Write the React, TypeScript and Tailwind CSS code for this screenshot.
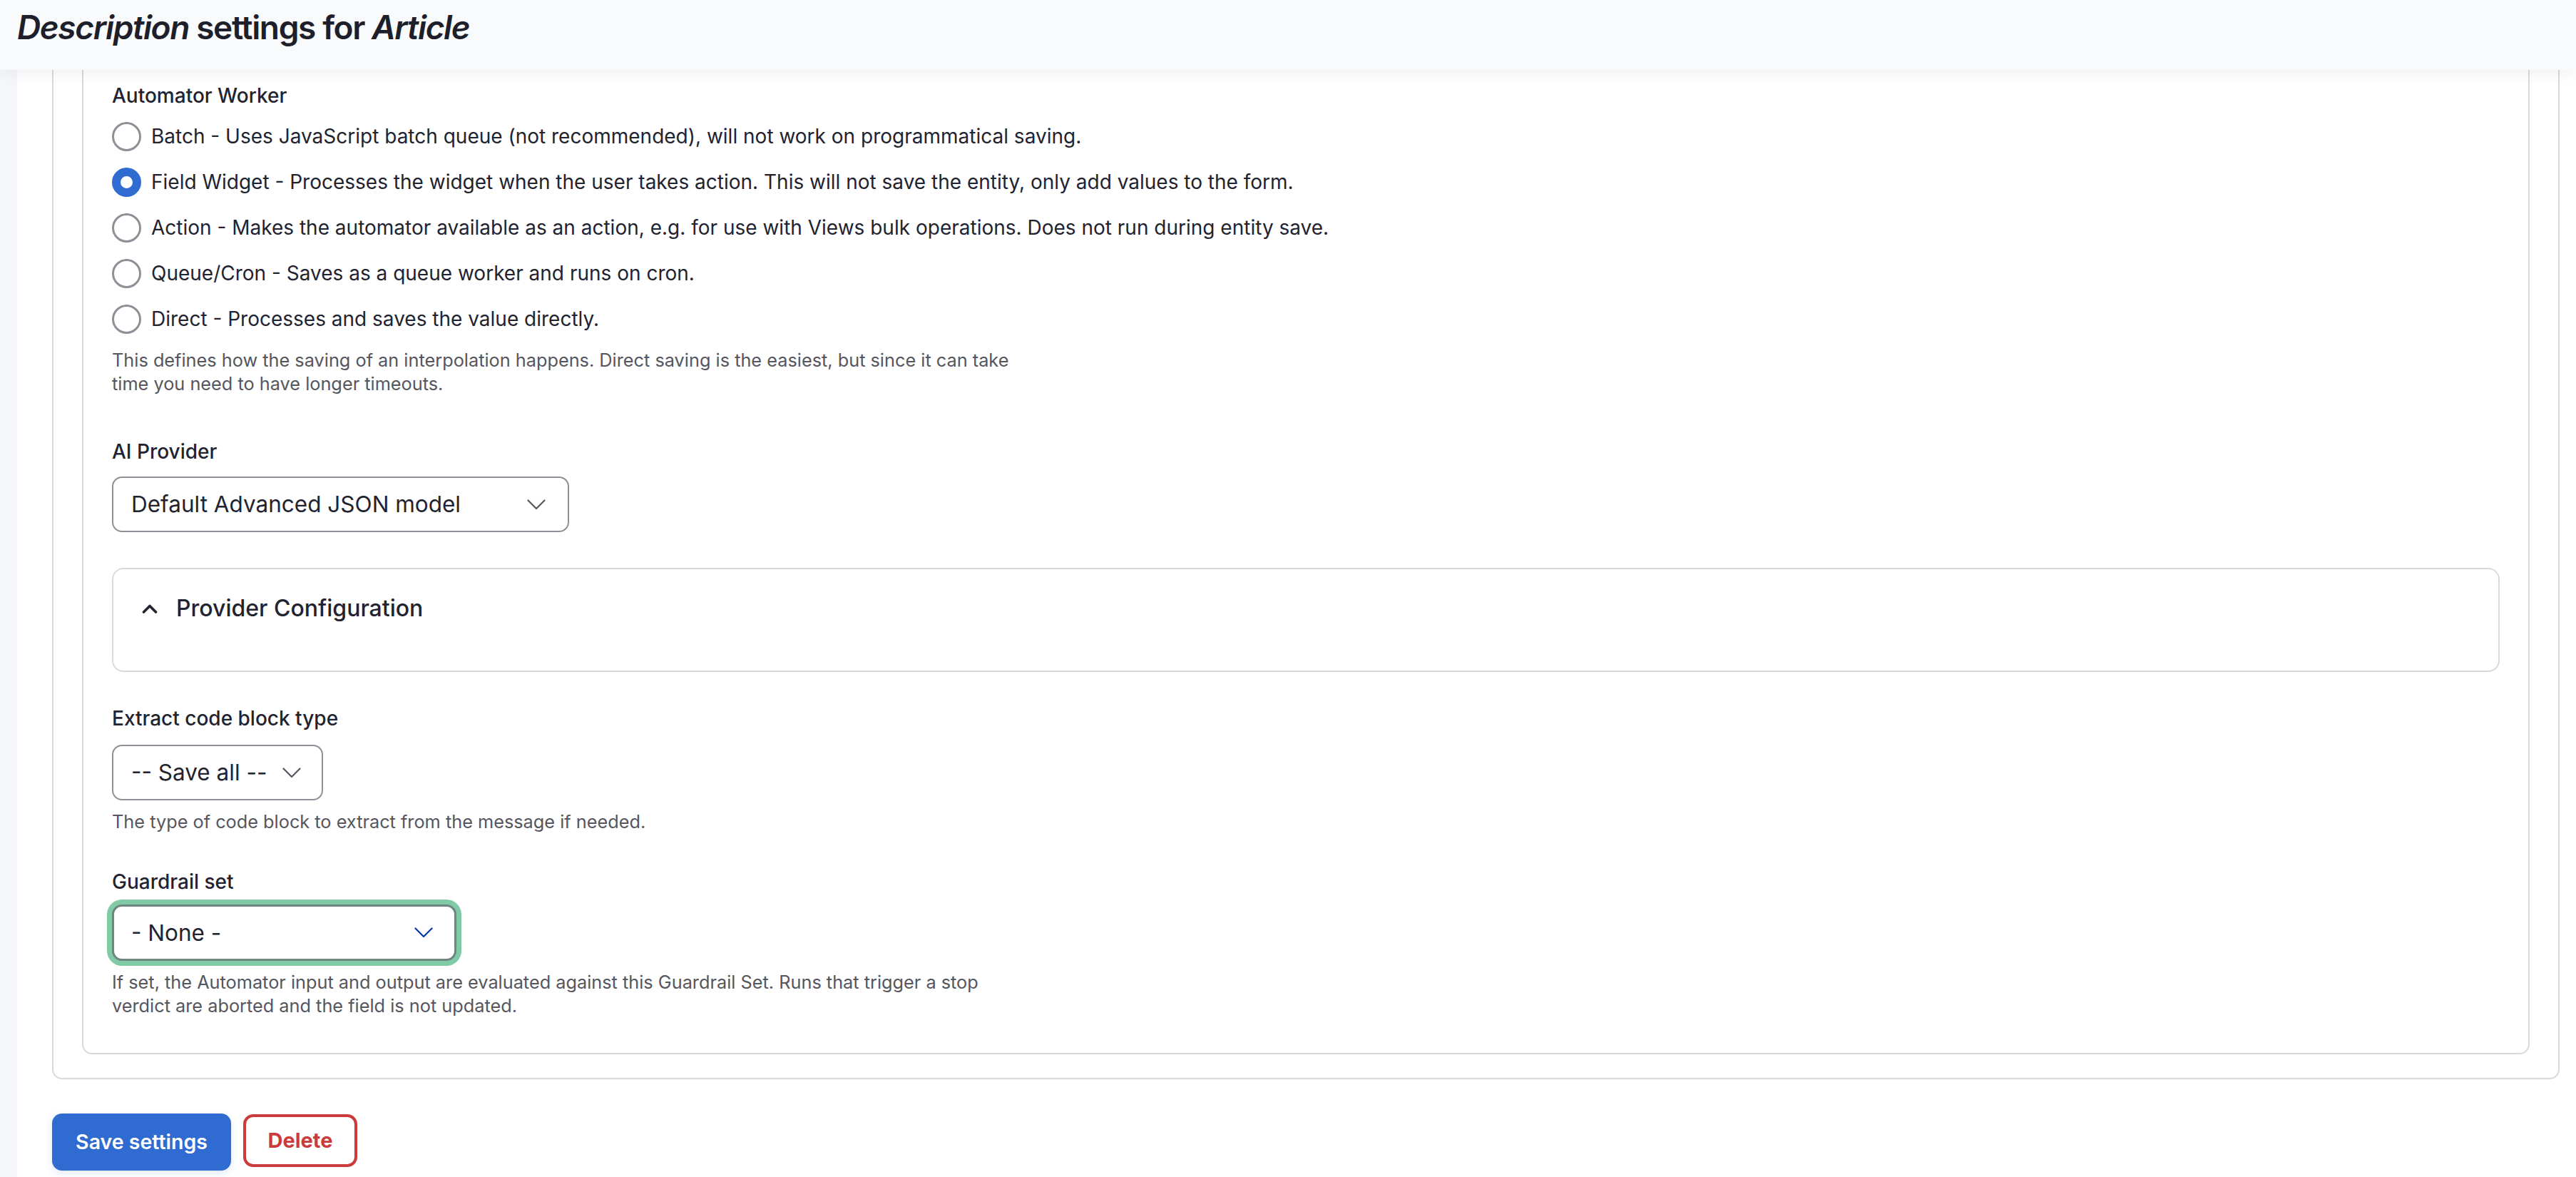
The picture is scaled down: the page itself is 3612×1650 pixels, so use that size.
import React from "react";

const labelCls = "block text-[28px] leading-[36px] font-medium text-[#222330]";
const descCls = "max-w-[1272px] text-[25.3px] leading-[33px] text-[#55565e]";

const workers = [
  { label: "Batch - Uses JavaScript batch queue (not recommended), will not work on programmatical saving.", checked: false },
  { label: "Field Widget - Processes the widget when the user takes action. This will not save the entity, only add values to the form.", checked: true },
  { label: "Action - Makes the automator available as an action, e.g. for use with Views bulk operations. Does not run during entity save.", checked: false },
  { label: "Queue/Cron - Saves as a queue worker and runs on cron.", checked: false },
  { label: "Direct - Processes and saves the value directly.", checked: false },
];

function Chevron({ color = "#55565e" }: { color?: string }) {
  return (
    <svg width="26" height="15" viewBox="0 0 26 15" fill="none" className="shrink-0">
      <path d="M1.5 1.5 L13 13 L24.5 1.5" stroke={color} strokeWidth="2.2" strokeLinecap="round" strokeLinejoin="round" />
    </svg>
  );
}

function Radio({ label, checked }: { label: string; checked: boolean }) {
  return (
    <label className="flex h-[64px] items-center gap-[14px] cursor-pointer">
      <span
        className={
          checked
            ? "w-[41px] h-[41px] shrink-0 rounded-full border-[12px] border-[#2f6bd0] bg-white"
            : "w-[41px] h-[41px] shrink-0 rounded-full border-[3px] border-[#8e9098] bg-white"
        }
      />
      <span className="text-[28px] leading-[36px] text-[#222330]">{label}</span>
    </label>
  );
}

export default function App() {
  return (
    <div className="min-h-screen bg-white font-['Inter',sans-serif] text-[#222330]">
      <header className="relative z-10 h-[98px] bg-[#f9fafc] pl-[24px] pt-[10px] shadow-[0_6px_22px_rgba(20,20,40,0.06)]">
        <h1 className="text-[46px] leading-[56px] font-semibold tracking-[-0.03em] text-[#1e1f2b]">
          <em>Description</em> settings for <em>Article</em>
        </h1>
      </header>

      <div className="flex">
        <div className="w-[24px] shrink-0 bg-[#f6f7fa]" />
        <main className="flex-1 pl-[49px] pr-[23px] pb-[9px]">
          <div className="border-2 border-t-0 border-[#d9dade] rounded-b-[14px] px-[40px] pb-[33px]">
            <div className="border-2 border-t-0 border-[#d9dade] rounded-b-[14px] px-[40px] pt-[18px] pb-[50px]">
              <span className={labelCls}>Automator Worker</span>
              <div className="mt-[7px] flex flex-col">
                {workers.map((w) => (
                  <Radio key={w.label} label={w.label} checked={w.checked} />
                ))}
              </div>
              <p className={"mt-[9px] " + descCls}>
                This defines how the saving of an interpolation happens. Direct saving is the easiest, but since it can take time you need to have longer timeouts.
              </p>

              <span className={"mt-[61px] " + labelCls}>AI Provider</span>
              <div className="mt-[17px] flex h-[78px] w-[641px] items-center justify-between rounded-[14px] border-2 border-[#8e9098] bg-white pl-[25px] pr-[31px]">
                <span className="text-[31.5px] text-[#222330]">Default Advanced JSON model</span>
                <Chevron />
              </div>

              <div className="mt-[50px] h-[146px] rounded-[16px] border-2 border-[#d9dade] pl-[40px] pt-[37px]">
                <div className="flex h-[36px] items-center gap-[26px]">
                  <svg width="22" height="13" viewBox="0 0 22 13" fill="none" className="shrink-0">
                    <path d="M2.5 11 L11 2.5 L19.5 11" stroke="#222330" strokeWidth="3.6" strokeLinecap="round" strokeLinejoin="round" />
                  </svg>
                  <span className="text-[32px] font-medium text-[#222330]">Provider Configuration</span>
                </div>
              </div>

              <span className={"mt-[47px] " + labelCls}>Extract code block type</span>
              <div className="mt-[19px] flex h-[78px] w-[296px] items-center justify-between rounded-[14px] border-2 border-[#8e9098] bg-white pl-[25px] pr-[29px]">
                <span className="text-[31.5px] text-[#222330]">-- Save all --</span>
                <Chevron />
              </div>
              <p className={"mt-[13px] " + descCls}>The type of code block to extract from the message if needed.</p>

              <span className={"mt-[50px] " + labelCls}>Guardrail set</span>
              <div className="mt-[14px] flex h-[79px] w-[483px] items-center justify-between rounded-[14px] border-[3px] border-[#6f8580] bg-white pl-[24px] pr-[30px] ring-[7px] ring-[#80caa6]">
                <span className="text-[31.5px] text-[#222330]">- None -</span>
                <Chevron color="#0036b1" />
              </div>
              <p className={"mt-[13px] " + descCls}>
                If set, the Automator input and output are evaluated against this Guardrail Set. Runs that trigger a stop verdict are aborted and the field is not updated.
              </p>
            </div>
          </div>

          <div className="mt-[48px] flex items-start gap-[17px]">
            <button className="h-[80px] w-[251px] rounded-[14px] bg-[#2f6bd0] text-[28.5px] font-semibold text-white shadow-[0_4px_12px_rgba(47,107,208,0.15)]">
              Save settings
            </button>
            <button className="mt-[1px] h-[74px] w-[160px] rounded-[14px] border-[4px] border-[#cc3b3b] bg-white text-[29px] font-bold text-[#cc3b3b]">
              Delete
            </button>
          </div>
        </main>
      </div>
    </div>
  );
}
